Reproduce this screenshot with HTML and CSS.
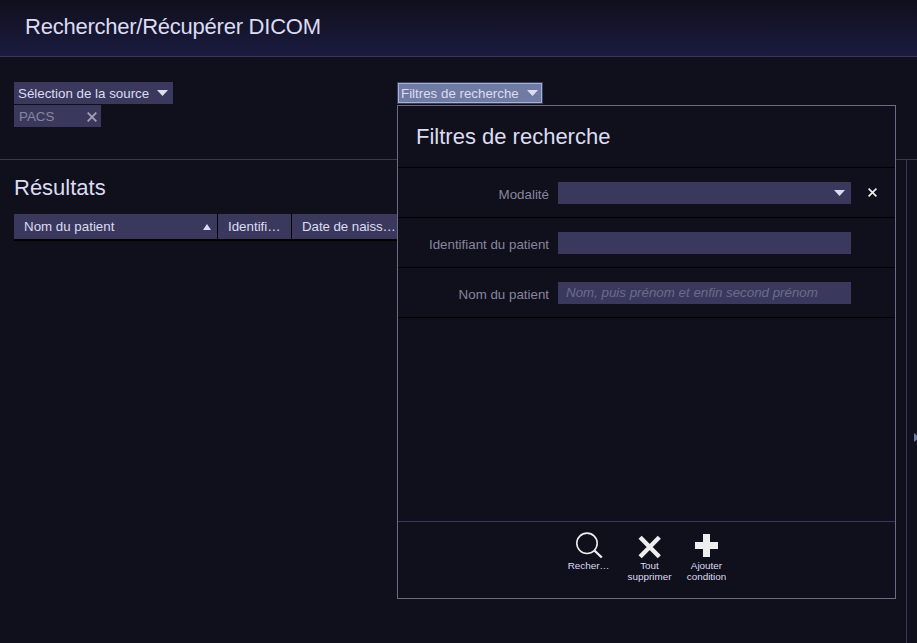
FILE: index.html
```html
<!DOCTYPE html>
<html lang="fr">
<head>
<meta charset="utf-8">
<title>Rechercher/Récupérer DICOM</title>
<link rel="stylesheet" href="styles.css">
</head>
<body>
<header class="header"><h1>Rechercher/Récupérer DICOM</h1></header>
<section class="toolbar">
  <div class="source">
    <button class="drop source-button"><span>Sélection de la source</span><svg class="caret" viewBox="0 0 11 6"><path d="M0 0h11L5.5 6z"/></svg></button>
    <div class="chip"><span>PACS</span><svg class="chip-close" viewBox="0 0 10 10"><path d="M.7.7l8.6 8.6M9.3.7L.7 9.3"/></svg></div>
  </div>
  <div class="filter">
    <button class="drop filter-button"><span>Filtres de recherche</span><svg class="caret" viewBox="0 0 11 6"><path d="M0 0h11L5.5 6z"/></svg></button>
    <div class="popup">
      <h2>Filtres de recherche</h2>
      <div class="row"><label>Modalité</label><div class="field select"><svg class="caret" viewBox="0 0 11 6"><path d="M0 0h11L5.5 6z"/></svg></div><svg class="row-close" viewBox="0 0 9 9"><path d="M.6.6l7.8 7.8M8.4.6L.6 8.4"/></svg></div>
      <div class="row"><label>Identifiant du patient</label><div class="field"></div></div>
      <div class="row"><label>Nom du patient</label><div class="field hint">Nom, puis prénom et enfin second prénom</div></div>
      <footer class="actions">
        <div class="action search"><svg viewBox="0 0 28 28"><circle cx="12" cy="11.3" r="10.2" fill="none" stroke="#eee" stroke-width="1.6"/><path d="M19.4 18.5l7.4 7" stroke="#eee" stroke-width="2.4"/></svg><span>Recher…</span></div>
        <div class="action clear"><svg viewBox="0 0 28 28"><path d="M4.1 5.3l19.2 19.4M23.3 5.3L4.1 24.7" stroke="#eee" stroke-width="4.4"/></svg><span>Tout<br>supprimer</span></div>
        <div class="action add"><svg viewBox="0 0 28 28"><path d="M13.5 2v23M2 13.5h23" stroke="#eee" stroke-width="7"/></svg><span>Ajouter<br>condition</span></div>
      </footer>
    </div>
  </div>
</section>
<main class="main">
  <section class="results">
    <h2>Résultats</h2>
    <div class="columns">
      <div class="column name">Nom du patient<svg class="sort" viewBox="0 0 8 6"><path d="M4 0l4 6H0z"/></svg></div>
      <div class="column ident">Identifi…</div>
      <div class="column birth">Date de naiss…</div>
    </div>
  </section>
  <aside class="side"><svg class="expand" viewBox="0 0 3 9"><path d="M0 0l3 2.5v4L0 9z"/></svg></aside>
</main>
</body>
</html>
```
FILE: styles.css
```css
* { box-sizing: border-box; }
body {
  margin: 0;
  height: 643px;
  display: flex;
  flex-direction: column;
  overflow: hidden;
  background: #100f1c;
  color: #dcdcf2;
  font: 13.33px/22px "Liberation Sans", Arial, sans-serif;
}
h1, h2 { margin: 0; font-size: 22px; font-weight: 400; line-height: 26px; white-space: nowrap; }
h1 { letter-spacing: -0.24px; }
svg { display: block; flex: none; }
.header {
  height: 57px;
  flex: none;
  padding: 14px 25px 0;
  background: linear-gradient(#100f1c, #1b1b40);
  border-bottom: 1px solid #39385c;
}
.toolbar {
  height: 103px;
  flex: none;
  display: flex;
  padding: 25px 14px 0;
  border-bottom: 1px solid #39385c;
}
.source { width: 383px; display: flex; flex-direction: column; gap: 1px; align-items: flex-start; }
.drop {
  display: flex;
  align-items: center;
  justify-content: space-between;
  height: 22px;
  border: 0;
  font: inherit;
  line-height: 20px;
  color: inherit;
  white-space: nowrap;
}
.source-button { width: 159px; padding: 2px 5px 0 4px; background: #3a395d; }
.caret { width: 11px; height: 6px; fill: #dcdcf2; margin-top: -2px; }
.chip {
  width: 87px;
  height: 22px;
  padding: 2px 4px 0 5px;
  display: flex;
  align-items: center;
  justify-content: space-between;
  background: #3a395d;
  color: #87869e;
}
.chip-close { width: 10px; height: 10px; stroke: #a5a4bb; stroke-width: 1.7; }
.filter { position: relative; }
.filter-button {
  width: 146px;
  padding: 2px 4px 0 3px;
  background: #707ba3;
  border: 1px solid #39406a;
  outline: 1px solid #a5b0d5;
  outline-offset: -2px;
}
.popup {
  position: absolute;
  z-index: 2;
  left: 0;
  top: 23px;
  width: 499px;
  height: 494px;
  display: flex;
  flex-direction: column;
  background: #100f1c;
  border: 1px solid #6c6b85;
}
.popup h2 { height: 62px; padding: 18px 18px 0; border-bottom: 1px solid #000; }
.row {
  height: 50px;
  flex: none;
  display: flex;
  align-items: flex-start;
  padding-top: 14px;
  border-bottom: 1px solid #000;
}
.row label { width: 151px; margin-right: 9px; padding-top: 2px; text-align: right; color: #87869e; }
.field { width: 293px; height: 22px; background: #3a395d; }
.select { display: flex; align-items: center; justify-content: flex-end; padding: 1px 6px 0 0; }
.hint { padding-left: 8px; color: #6c6b8c; font-style: italic; white-space: nowrap; }
.row-close { width: 9px; height: 9px; margin: 6px 0 0 17px; stroke: #eee; stroke-width: 1.7; }
.actions {
  height: 77px;
  margin-top: auto;
  display: flex;
  padding: 10px 0 0 163px;
  border-top: 1px solid #39385c;
}
.action { display: flex; flex-direction: column; align-items: center; text-align: center; font-size: 9.9px; line-height: 11px; }
.action svg { width: 28px; height: 28px; }
.action span { white-space: nowrap; }
.search { width: 55px; }
.clear { width: 67px; }
.add { width: 47px; }
.main { flex: 1; display: flex; }
.results { width: 906px; padding: 15px 14px 0 14px; }
.columns { display: flex; gap: 1px; height: 27px; margin-top: 13px; background: #000; border-bottom: 2px solid #000; }
.column { padding-left: 10px; line-height: 25px; background: #3a395d; white-space: nowrap; }
.name { width: 203px; display: flex; align-items: center; justify-content: space-between; padding-right: 6px; }
.ident { width: 73px; }
.birth { flex: 1; letter-spacing: -0.07px; }
.sort { width: 8px; height: 6px; fill: #dcdcf2; }
.side { flex: 1; display: flex; justify-content: flex-end; border-left: 1px solid #39385c; }
.expand { width: 3px; height: 9px; margin-top: 273px; fill: #707ba3; }
```
